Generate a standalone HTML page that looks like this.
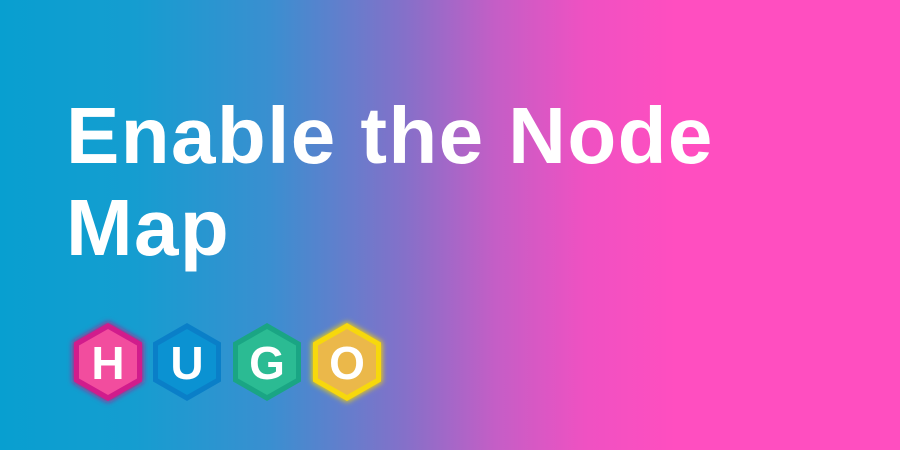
<!DOCTYPE html>
<html><head><style>
html,body{margin:0;padding:0}
body{width:900px;height:450px;overflow:hidden;position:relative;
background:linear-gradient(90deg,#089fd0 0%,#159dd0 15%,#3a8fd0 30%,#8570c9 45%,#c45ec6 55%,#ef51c2 65%,#ff4ec0 75%,#ff4ec0 100%);
font-family:"Liberation Sans",sans-serif}
.t{position:absolute;left:66px;color:#fff;font-weight:bold;font-size:80px;line-height:80px;white-space:nowrap;letter-spacing:1.4px}
</style></head><body>
<div class="t" style="top:96px">Enable the Node</div>
<div class="t" style="top:188px">Map</div>
<svg width="900" height="450" style="position:absolute;left:0;top:0">
<defs><filter id="s" x="-30%" y="-30%" width="160%" height="160%"><feGaussianBlur stdDeviation="3"/></filter></defs>
<g font-family="Liberation Sans,sans-serif" font-weight="bold" font-size="46" fill="#fff" text-anchor="middle">
<g transform="translate(108,362)">
<polygon points="0,-40 35,-20 35,20 0,40 -35,20 -35,-20" fill="#c4127f" filter="url(#s)"/>
<polygon points="0,-39 34,-19.5 34,19.5 0,39 -34,19.5 -34,-19.5" fill="#d11c8c"/>
<polygon points="0,-33 29,-16.5 29,16.5 0,33 -29,16.5 -29,-16.5" fill="#f24d9e"/>
<text y="17">H</text></g>
<g transform="translate(187,362)">
<polygon points="0,-39 34,-19.5 34,19.5 0,39 -34,19.5 -34,-19.5" fill="#0a7fc8"/>
<polygon points="0,-33 29,-16.5 29,16.5 0,33 -29,16.5 -29,-16.5" fill="#0b92d2"/>
<text y="17">U</text></g>
<g transform="translate(267,362)">
<polygon points="0,-39 34,-19.5 34,19.5 0,39 -34,19.5 -34,-19.5" fill="#1aa584"/>
<polygon points="0,-33 29,-16.5 29,16.5 0,33 -29,16.5 -29,-16.5" fill="#2bbb93"/>
<text y="17">G</text></g>
<g transform="translate(347,362)">
<polygon points="0,-40 35,-20 35,20 0,40 -35,20 -35,-20" fill="#f6d500" filter="url(#s)"/>
<polygon points="0,-39 34,-19.5 34,19.5 0,39 -34,19.5 -34,-19.5" fill="#f7d80c"/>
<polygon points="0,-33 29,-16.5 29,16.5 0,33 -29,16.5 -29,-16.5" fill="#ebb84a"/>
<text y="17">O</text></g>
</g></svg>
</body></html>
